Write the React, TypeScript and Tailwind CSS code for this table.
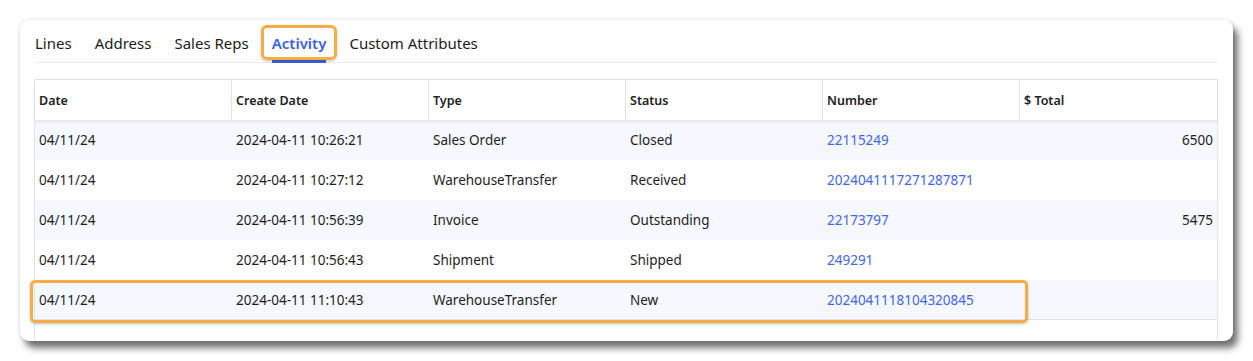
import React from "react";

const rows = [
  { d: "04/11/24", c: "2024-04-11 10:26:21", t: "Sales Order", s: "Closed", n: "22115249", tot: "6500" },
  { d: "04/11/24", c: "2024-04-11 10:27:12", t: "WarehouseTransfer", s: "Received", n: "2024041117271287871", tot: "" },
  { d: "04/11/24", c: "2024-04-11 10:56:39", t: "Invoice", s: "Outstanding", n: "22173797", tot: "5475" },
  { d: "04/11/24", c: "2024-04-11 10:56:43", t: "Shipment", s: "Shipped", n: "249291", tot: "" },
  { d: "04/11/24", c: "2024-04-11 11:10:43", t: "WarehouseTransfer", s: "New", n: "2024041118104320845", tot: "" },
];

const headers = ["Date", "Create Date", "Type", "Status", "Number", "$ Total"];

export default function App() {
  return (
    <div
      className="w-[1253px] h-[361px] bg-white pt-[20px] pl-[20px]"
      style={{ fontFamily: '"Noto Sans", "Open Sans", sans-serif' }}
    >
      <div className="relative w-[1213px] h-[321px] bg-white rounded-[9px] overflow-hidden shadow-[0_0_5px_rgba(0,0,0,0.12),5px_7px_7px_rgba(0,0,0,0.55)] pl-[14px] pr-[15px]">
        {/* tabs */}
        <div className="flex items-center h-[43px] border-b border-[#ececec] text-[15px] text-[#1b1b1b] gap-[23px] pl-[1px]">
          <div className="pt-[4px]">Lines</div>
          <div className="pt-[4px]">Address</div>
          <div className="pt-[4px]">Sales Reps</div>
          <div className="relative pt-[4px] h-full flex items-center text-[#3d5ee6] font-semibold">
            Activity
            <div className="absolute left-0 right-0 bottom-[-1px] h-[3px] bg-[#3a63e0]" />
          </div>
          <div className="pt-[4px]">Custom Attributes</div>
        </div>

        {/* table */}
        <div className="mt-[16px] h-[262px] border border-[#e3e3e3] border-b-0">
          <div className="grid grid-cols-6 h-[40px] bg-white shadow-[0_2px_3px_rgba(0,0,0,0.08)] relative z-10 text-[12.5px] font-semibold text-[#222]">
            {headers.map((h, i) => (
              <div
                key={h}
                className={`flex items-center pl-[4px] pt-[2px] ${i < 5 ? "border-r border-[#e3e3e3]" : ""}`}
              >
                {h}
              </div>
            ))}
          </div>
          {rows.map((r, i) => (
            <div
              key={i}
              className={`grid grid-cols-6 h-[40px] text-[13.5px] text-[#1e1e1e] ${i % 2 === 0 ? "bg-[#f5f8fe]" : "bg-white"} ${i === rows.length - 1 ? "border-b border-[#e3e3e3]" : ""}`}
            >
              <div className="flex items-center pl-[4px] pt-[1px]">{r.d}</div>
              <div className="flex items-center pl-[4px] pt-[1px]">{r.c}</div>
              <div className="flex items-center pl-[4px] pt-[1px]">{r.t}</div>
              <div className="flex items-center pl-[4px] pt-[1px]">{r.s}</div>
              <div className="flex items-center pl-[4px] pt-[1px] text-[#4466e4]">{r.n}</div>
              <div className="flex items-center justify-end pr-[4px] pt-[1px]">{r.tot}</div>
            </div>
          ))}
        </div>

        {/* highlight overlays */}
        <div className="absolute left-[241px] top-[5px] w-[76px] h-[35px] border-[3px] border-[#f6ad45] rounded-[6px] shadow-[0_1px_3px_rgba(0,0,0,0.25)]" />
        <div className="absolute left-[10px] top-[260px] w-[998px] h-[43px] border-[3px] border-[#f6ad45] rounded-[5px] shadow-[0_1px_3px_rgba(0,0,0,0.25)]" />
      </div>
    </div>
  );
}
